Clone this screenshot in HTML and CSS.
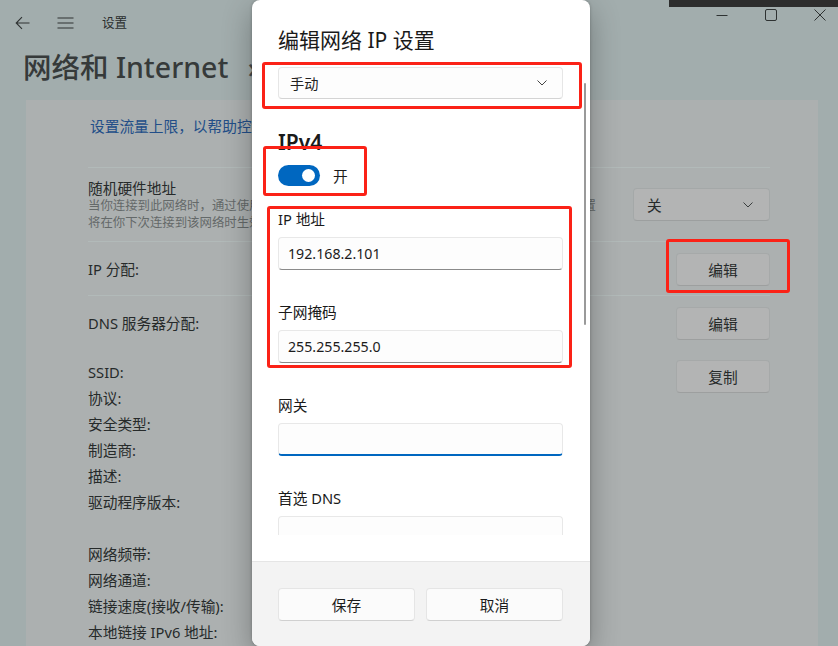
FILE: index.html
```html
<!DOCTYPE html>
<html lang="zh-CN">
<head>
<meta charset="utf-8">
<title>设置</title>
<link rel="stylesheet" href="styles.css">
</head>
<body>
<div class="app">
  <header class="titlebar">
    <svg class="tb-icon back" width="15" height="14" viewBox="0 0 15 14"><path d="M14.5 7H1.2M7 1.2L1.2 7L7 12.8" fill="none" stroke="#2e3232" stroke-width="1.1"/></svg>
    <svg class="tb-icon menu" width="17" height="12" viewBox="0 0 17 12"><path d="M0.5 1H16.5M0.5 6H16.5M0.5 11H16.5" fill="none" stroke="#2e3232" stroke-width="1.1"/></svg>
    <span class="app-name">设置</span>
    <div class="winctrl">
      <svg width="12" height="12" viewBox="0 0 12 12"><path d="M0.5 6.5H11.5" stroke="#2e3232" stroke-width="1"/></svg>
      <svg width="12" height="12" viewBox="0 0 12 12"><rect x="0.5" y="0.5" width="11" height="11" rx="1.5" fill="none" stroke="#2e3232" stroke-width="1"/></svg>
      <svg width="12" height="12" viewBox="0 0 12 12"><path d="M0.5 0.5L11.5 11.5M11.5 0.5L0.5 11.5" stroke="#2e3232" stroke-width="1"/></svg>
    </div>
  </header>
  <h1 class="page-title">网络和 Internet <span class="crumb-sep">›</span> WLAN</h1>
  <section class="card">
    <div class="row row-link">
      <span class="link">设置流量上限，以帮助控制此网络上的数据使用量</span>
    </div>
    <div class="row row-hw">
      <div class="row-text">
        <div class="row-title">随机硬件地址</div>
        <div class="row-desc">
          <span class="desc-line">当你连接到此网络时，通过使用随机硬件地址，可以让其他人更难跟踪你的设备位置。此设置</span>
          <span class="desc-line">将在你下次连接到该网络时生效。</span>
        </div>
      </div>
      <div class="select">
        <span>关</span>
        <svg width="10" height="6" viewBox="0 0 10 6"><path d="M0.5 0.5L5 5L9.5 0.5" fill="none" stroke="#3a3e3e" stroke-width="1"/></svg>
      </div>
    </div>
    <div class="row row-ip">
      <span class="row-title">IP 分配:</span>
      <span class="btn">编辑</span>
    </div>
    <div class="row row-dns">
      <span class="row-title">DNS 服务器分配:</span>
      <span class="btn">编辑</span>
    </div>
    <div class="props">
      <ul class="prop-list">
        <li>SSID:</li>
        <li>协议:</li>
        <li>安全类型:</li>
        <li>制造商:</li>
        <li>描述:</li>
        <li>驱动程序版本:</li>
        <li class="blank"></li>
        <li>网络频带:</li>
        <li>网络通道:</li>
        <li>链接速度(接收/传输):</li>
        <li>本地链接 IPv6 地址:</li>
      </ul>
      <span class="btn">复制</span>
    </div>
  </section>
</div>

<div class="tooltip-edge"></div>

<div class="dialog">
  <div class="dialog-main">
    <div class="dialog-scroll">
      <h2 class="dialog-title">编辑网络 IP 设置</h2>
      <div class="dd">
        <span>手动</span>
        <svg width="10" height="6" viewBox="0 0 10 6"><path d="M0.5 0.5L5 5L9.5 0.5" fill="none" stroke="#444" stroke-width="1"/></svg>
      </div>
      <h3 class="section-title">IPv4</h3>
      <div class="toggle-row">
        <span class="toggle"><span class="knob"></span></span>
        <span class="toggle-label">开</span>
      </div>
      <div class="field field-first">
        <div class="field-label">IP 地址</div>
        <div class="input">192.168.2.101</div>
      </div>
      <div class="field">
        <div class="field-label">子网掩码</div>
        <div class="input">255.255.255.0</div>
      </div>
      <div class="field">
        <div class="field-label">网关</div>
        <div class="input focused"></div>
      </div>
      <div class="field">
        <div class="field-label">首选 DNS</div>
        <div class="input"></div>
      </div>
    </div>
    <div class="scrollbar"></div>
  </div>
  <div class="dialog-footer">
    <span class="dbtn">保存</span>
    <span class="dbtn">取消</span>
  </div>
</div>

<div class="mark mark-mode"></div>
<div class="mark mark-toggle"></div>
<div class="mark mark-fields"></div>
<div class="mark mark-edit"></div>
</body>
</html>
```

FILE: styles.css
```css
html, body {
  margin: 0;
  padding: 0;
}
body {
  width: 838px;
  height: 646px;
  overflow: hidden;
  position: relative;
  background: #a2adad;
  font-family: "Noto Sans", "Noto Sans CJK SC", sans-serif;
  color: #262a2a;
}

.app {
  display: flex;
  flex-direction: column;
  height: 646px;
}

.titlebar {
  height: 46px;
  display: flex;
  align-items: center;
  padding-left: 15px;
  flex: none;
}
.tb-icon { display: block; }
.menu { margin-left: 27px; }
.app-name {
  margin-left: 28px;
  font-size: 12.6px;
  color: #2a2e2e;
  line-height: 18px;
}
.winctrl {
  margin-left: auto;
  display: flex;
  align-items: center;
  gap: 37px;
  padding-right: 12px;
  margin-top: -16px;
}
.winctrl svg { display: block; }

.page-title {
  margin: 1px 0 13px 23px;
  font-size: 28.5px;
  line-height: 40px;
  font-weight: 500;
  color: #363a3a;
  white-space: nowrap;
}
.crumb-sep {
  margin-left: 12px;
  color: #4a4e4e;
}

.card {
  margin-left: 26px;
  width: 792px;
  flex: 1;
  background: #acb0b0;
  padding: 0 48px 0 62px;
  box-sizing: border-box;
  overflow: hidden;
  font-size: 14.7px;
}

.row {
  display: flex;
  align-items: center;
  justify-content: space-between;
  border-top: 1px solid #b2bab9;
}
.row-link {
  border-top: none;
  height: 67px;
  align-items: flex-start;
  padding-top: 16px;
  box-sizing: border-box;
  padding-left: 2px;
}
.link {
  color: #224e88;
  line-height: 20px;
  white-space: nowrap;
}
.row-hw { height: 73px; }
.row-ip { height: 53px; }
.row-dns { height: 54px; }

.row-title {
  line-height: 20px;
  white-space: nowrap;
}
.row-desc {
  font-size: 12.4px;
  line-height: 16.5px;
  color: #646969;
}
.desc-line {
  display: block;
  white-space: nowrap;
}
.row-text {
  width: 0;
  flex: 1;
}

.select {
  width: 137px;
  height: 33px;
  box-sizing: border-box;
  border: 1px solid #a4a8a8;
  border-bottom-color: #9c9f9f;
  border-radius: 4px;
  background: #b3b4b4;
  display: flex;
  align-items: center;
  justify-content: space-between;
  padding: 0 16px 0 13px;
  flex: none;
}

.btn {
  width: 94px;
  height: 33px;
  box-sizing: border-box;
  border: 1px solid #a6a9a9;
  border-bottom-color: #9d9f9f;
  border-radius: 4px;
  background: #b3b4b4;
  display: flex;
  align-items: center;
  justify-content: center;
  flex: none;
  color: #262a2a;
}
.row-ip .btn { margin-top: 1px; }

.props {
  display: flex;
  justify-content: space-between;
  align-items: flex-start;
  padding-top: 9px;
}
.prop-list {
  list-style: none;
  margin: 0;
  padding: 0;
}
.prop-list li {
  line-height: 26px;
  height: 26px;
  white-space: nowrap;
}
.props .btn { margin-top: 1px; }

.tooltip-edge {
  position: absolute;
  left: 669px;
  top: 0;
  width: 169px;
  height: 7px;
  background: #2d2d2d;
}

/* dialog */
.dialog {
  position: absolute;
  left: 252px;
  top: 0;
  width: 338px;
  height: 646px;
  background: #ffffff;
  border-radius: 8px;
  box-shadow: 0 0 3px rgba(0,0,0,0.25), 0 10px 30px rgba(0,0,0,0.3);
  display: flex;
  flex-direction: column;
  overflow: hidden;
  color: #1b1b1b;
  font-size: 14.7px;
}
.dialog-main {
  height: 561px;
  flex: none;
  box-sizing: border-box;
  padding: 0 27px 26px 26px;
  position: relative;
}
.dialog-scroll {
  height: 535px;
  overflow: hidden;
  padding-top: 24px;
  box-sizing: border-box;
}
.dialog-title {
  margin: 0;
  font-size: 21px;
  line-height: 32px;
  font-weight: 400;
  color: #1a1a1a;
}
.dd {
  margin-top: 11px;
  height: 32px;
  box-sizing: border-box;
  border: 1px solid #e6e6e6;
  border-bottom-color: #d4d4d4;
  border-radius: 4px;
  background: #fdfdfd;
  display: flex;
  align-items: center;
  justify-content: space-between;
  padding: 0 15px 0 11px;
  font-size: 14.2px;
  color: #222;
}
.section-title {
  margin: 29px 0 0 0;
  font-size: 21px;
  line-height: 28px;
  font-weight: 600;
  color: #1a1a1a;
}
.toggle-row {
  margin-top: 9px;
  display: flex;
  align-items: center;
  height: 21px;
}
.toggle {
  width: 42px;
  height: 21px;
  border-radius: 11px;
  background: #0067c0;
  position: relative;
  display: block;
  flex: none;
}
.knob {
  position: absolute;
  right: 5px;
  top: 4px;
  width: 13px;
  height: 13px;
  border-radius: 50%;
  background: #fff;
}
.toggle-label {
  margin-left: 13px;
  line-height: 20px;
}
.field { margin-top: 32px; }
.field.field-first { margin-top: 23px; }
.field-label {
  line-height: 20px;
  color: #1a1a1a;
}
.input {
  margin-top: 8px;
  height: 33px;
  box-sizing: border-box;
  border: 1px solid #e8e8e8;
  border-bottom: 1px solid #8a8a8a;
  border-radius: 4px;
  background: #fdfdfd;
  display: flex;
  align-items: center;
  padding: 0 9px;
  font-size: 14.2px;
  color: #1c1c1c;
}
.input.focused {
  border-bottom: 2px solid #0067c0;
}
.scrollbar {
  position: absolute;
  left: 332px;
  top: 83px;
  width: 2px;
  height: 242px;
  border-radius: 1px;
  background: #9a9a9a;
}
.dialog-footer {
  flex: 1;
  border-top: 1px solid #e5e5e5;
  background: #f3f3f3;
  display: flex;
  gap: 11px;
  padding: 26px 27px 0 26px;
  box-sizing: border-box;
  align-items: flex-start;
}
.dbtn {
  flex: 1;
  height: 33px;
  box-sizing: border-box;
  border: 1px solid #e5e5e5;
  border-bottom-color: #d0d0d0;
  border-radius: 4px;
  background: #fbfbfb;
  display: flex;
  align-items: center;
  justify-content: center;
  color: #1b1b1b;
}

/* red annotation frames */
.mark {
  position: absolute;
  box-sizing: border-box;
  border: 3px solid #fb2217;
  border-radius: 3px;
}
.mark-mode { left: 262px; top: 62px; width: 320px; height: 47px; }
.mark-toggle { left: 263px; top: 146px; width: 104px; height: 50px; }
.mark-fields { left: 267px; top: 206px; width: 305px; height: 162px; }
.mark-edit { left: 666px; top: 239px; width: 124px; height: 54px; }
```
